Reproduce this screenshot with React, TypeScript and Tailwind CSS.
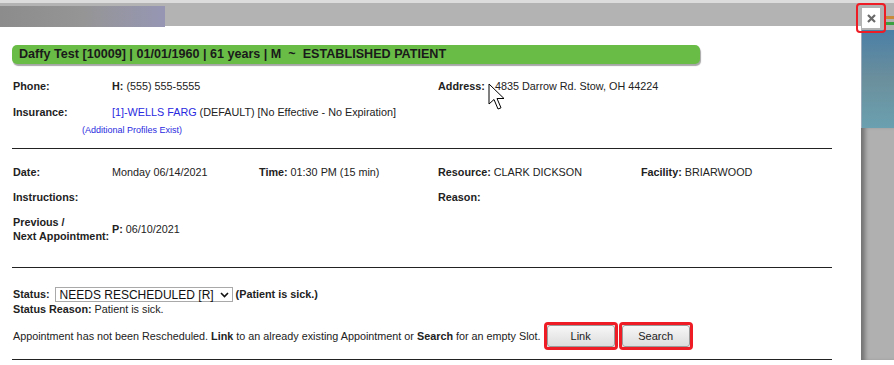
import React from "react";

const Label = ({ children, className = "" }: { children: React.ReactNode; className?: string }) => (
  <span className={"font-bold text-[#222] " + className}>{children}</span>
);

export default function App() {
  return (
    <div
      className="relative w-[894px] h-[365px] overflow-hidden bg-white text-[10.8px] text-[#222]"
      style={{ fontFamily: '"Liberation Sans", Arial, sans-serif' }}
    >
      {/* top bar */}
      <div className="h-[3px] bg-[#dcdcdc]" />
      <div className="h-[23px] bg-[#b3b3b3] flex">
        <div className="w-[165px] h-[21px] mt-[3px] bg-gradient-to-r from-[#8c8c8c] via-[#959595] to-[#9696b4]" />
      </div>

      <div className="flex">
        {/* main dialog */}
        <div className="w-[861px] pl-[12px] pr-[29px]">
          {/* green header */}
          <div className="mt-[19px] w-[688px] h-[19px] rounded-[5px] bg-[#69bd47] shadow-[1px_2px_1px_rgba(0,0,0,0.35)] flex items-center pl-[7px] text-[12.6px] font-bold text-[#1a1a1a]">
            Daffy Test [10009] | 01/01/1960 | 61 years | M&nbsp; ~&nbsp; ESTABLISHED PATIENT
          </div>

          {/* phone / address */}
          <div className="mt-[15px] flex h-[14px] items-center">
            <Label className="w-[100px] pl-[1px]">Phone:</Label>
            <span className="w-[326px]"><b>H:</b> (555) 555-5555</span>
            <Label className="w-[57px]">Address:</Label>
            <span>4835 Darrow Rd. Stow, OH 44224</span>
          </div>

          {/* insurance */}
          <div className="mt-[12px] flex h-[14px] items-center">
            <Label className="w-[100px] pl-[1px]">Insurance:</Label>
            <span>
              <span className="text-[#2a2ae0]">[1]-WELLS FARG</span> (DEFAULT) [No Effective - No Expiration]
            </span>
          </div>
          <div className="mt-[6px] pl-[70px] h-[12px] text-[9px] text-[#2a2ae0] flex items-center">
            (Additional Profiles Exist)
          </div>

          <div className="mt-[11px] h-px bg-[#222] w-[820px]" />

          {/* date row */}
          <div className="mt-[16px] flex h-[14px] items-center">
            <Label className="w-[100px] pl-[1px]">Date:</Label>
            <span className="w-[147px]">Monday 06/14/2021</span>
            <span className="w-[179px]"><b>Time:</b> 01:30 PM (15 min)</span>
            <span className="w-[203px]"><b>Resource:</b> CLARK DICKSON</span>
            <span><b>Facility:</b> BRIARWOOD</span>
          </div>

          <div className="mt-[11px] flex h-[14px] items-center">
            <Label className="w-[426px] pl-[1px]">Instructions:</Label>
            <Label>Reason:</Label>
          </div>

          <div className="mt-[11px] flex items-center">
            <div className="w-[100px] pl-[1px] font-bold leading-[14px]">
              Previous /<br />Next Appointment:
            </div>
            <span className="mt-[1px]"><b>P:</b> 06/10/2021</span>
          </div>

          <div className="mt-[24px] h-px bg-[#222] w-[820px]" />

          {/* status */}
          <div className="mt-[19px] flex items-center h-[15px]">
            <Label className="pl-[1px]">Status:</Label>
            <div className="ml-[5px] w-[178px] h-[15px] border border-[#a9a9a9] flex items-center pl-[4px] pr-[3px] text-[12px] text-[#111]">
              <span className="flex-1">NEEDS RESCHEDULED [R]</span>
              <svg width="9" height="6" viewBox="0 0 9 6"><path d="M1 1 L4.5 4.5 L8 1" fill="none" stroke="#111" strokeWidth="1.6" /></svg>
            </div>
            <Label className="ml-[3px]">(Patient is sick.)</Label>
          </div>
          <div className="h-[14px] flex items-center pl-[1px]">
            <b>Status Reason:</b>&nbsp;Patient is sick.
          </div>

          {/* appointment */}
          <div className="mt-[6px] flex items-center h-[28px]">
            <span className="pl-[1px]">
              Appointment has not been Rescheduled. <b>Link</b> to an already existing Appointment or <b>Search</b> for an empty Slot.
            </span>
            <div className="ml-[3px] border-[3px] border-[#ee1c24] rounded-[4px] p-0">
              <button className="w-[68px] h-[22px] rounded-[3px] border border-[#9a9a9a] bg-gradient-to-b from-[#f7f7f7] to-[#dddddd] text-[11px] text-[#222]">
                Link
              </button>
            </div>
            <div className="ml-[1px] border-[3px] border-[#ee1c24] rounded-[4px]">
              <button className="w-[68px] h-[22px] rounded-[3px] border border-[#9a9a9a] bg-gradient-to-b from-[#f7f7f7] to-[#dddddd] text-[11px] text-[#222]">
                Search
              </button>
            </div>
          </div>

          <div className="mt-[9px] h-px bg-[#222] w-[820px]" />
        </div>

        {/* right strip */}
        <div className="w-[33px] flex flex-col">
          <div className="h-[4px] bg-[#b3b3b3]" />
          <div className="h-[98px] bg-gradient-to-b from-[#4a7fa6] via-[#6b8f9c] to-[#6aa0b0] border-l border-[#9ab]" />
          <div className="flex-1 bg-[#b0b0b0] shadow-[inset_6px_0_4px_-2px_rgba(0,0,0,0.35)]" />
        </div>
      </div>

      {/* close button overlay */}
      <div className="absolute left-[856px] top-[3px] w-[30px] h-[30px] rounded-[4px] border-[2px] border-[#ee1c24] flex items-center justify-center">
        <div className="w-[18px] h-[20px] bg-white flex items-center justify-center">
          <svg width="9" height="9" viewBox="0 0 9 9">
            <path d="M1 1 L8 8 M8 1 L1 8" stroke="#6a6a6a" strokeWidth="2.2" />
          </svg>
        </div>
      </div>
      <div className="absolute left-[886px] top-[16px] w-[8px] h-[3px] bg-[#c88a3a]" />
      <div className="absolute left-[886px] top-[22px] w-[8px] h-[3px] bg-[#3aa040]" />

      {/* mouse cursor */}
      <svg className="absolute left-[488px] top-[83px]" width="20" height="30" viewBox="0 0 20 30">
        <path
          d="M1 1 L1 21 L6 16.5 L10 26 L13 24.8 L9 15.5 L16 15.5 Z"
          fill="white"
          stroke="black"
          strokeWidth="1"
          strokeLinejoin="miter"
        />
      </svg>
    </div>
  );
}
